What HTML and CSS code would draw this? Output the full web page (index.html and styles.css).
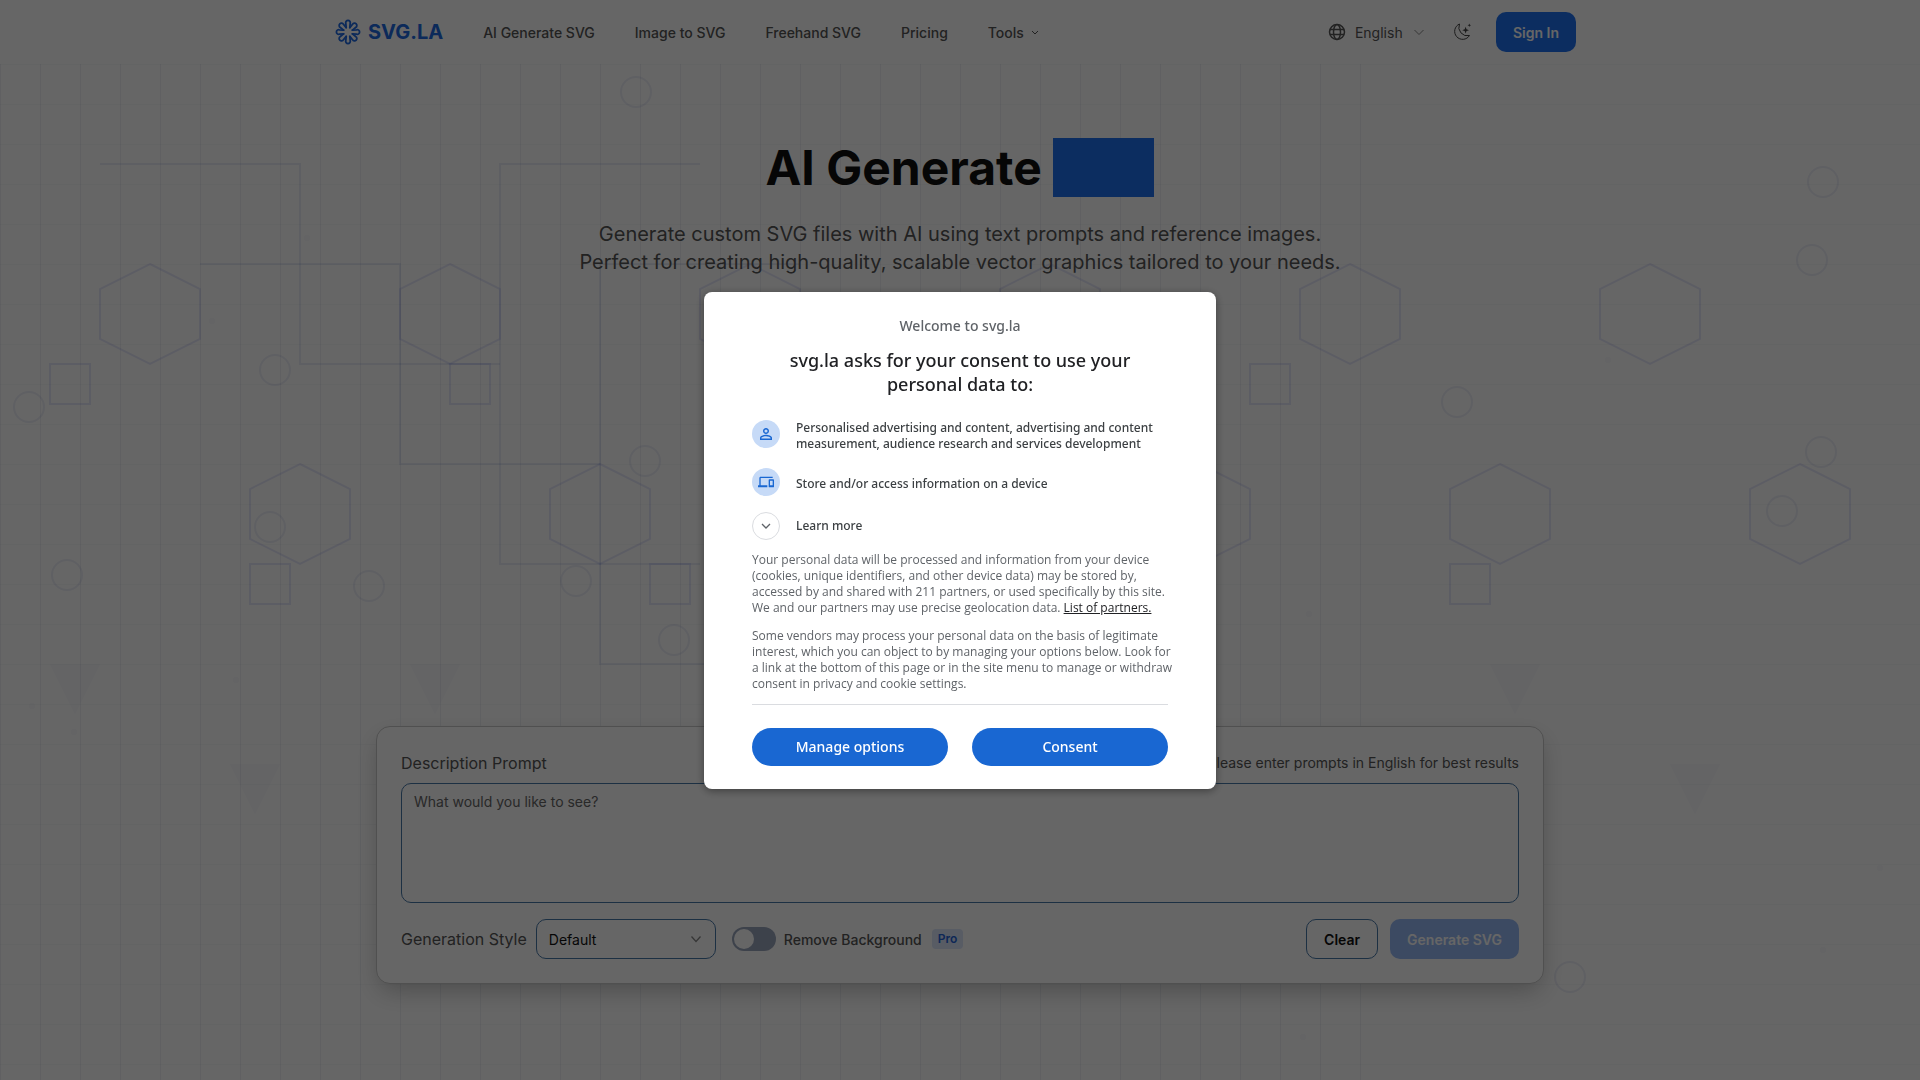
FILE: index.html
```html
<!DOCTYPE html>
<html lang="en">
<head>
    <meta charset="UTF-8">
    <meta name="viewport" content="width=device-width, initial-scale=1.0">
    <title>AI Generate SVG - SVG.LA</title>
    <link rel="stylesheet" href="styles.css">
</head>
<body>
    <header class="header">
        <div class="header-inner">
            <a class="logo" href="#">
                <svg width="26" height="26" viewBox="0 0 26 26" fill="none" stroke="currentColor" stroke-width="1.8" stroke-linecap="round">
                    <path id="petal" d="M11.2 8.6 L10.8 4.4 A2.3 2.3 0 1 1 15.2 4.4 L14.8 8.6"/>
                    <use href="#petal" transform="rotate(45 13 13)"/>
                    <use href="#petal" transform="rotate(90 13 13)"/>
                    <use href="#petal" transform="rotate(135 13 13)"/>
                    <use href="#petal" transform="rotate(180 13 13)"/>
                    <use href="#petal" transform="rotate(225 13 13)"/>
                    <use href="#petal" transform="rotate(270 13 13)"/>
                    <use href="#petal" transform="rotate(315 13 13)"/>
                </svg>
                <span>SVG.LA</span>
            </a>
            <nav class="nav">
                <a href="#">AI Generate SVG</a>
                <a href="#">Image to SVG</a>
                <a href="#">Freehand SVG</a>
                <a href="#">Pricing</a>
                <a href="#">Tools
                    <svg width="10" height="10" viewBox="0 0 10 10" fill="none" stroke="currentColor"><path d="M2 4 L5 7 L8 4"/></svg>
                </a>
            </nav>
            <div class="header-actions">
                <div class="language">
                    <svg width="18" height="18" viewBox="0 0 18 18" fill="none" stroke="currentColor" stroke-width="1.5">
                        <circle cx="9" cy="9" r="7.5"/>
                        <ellipse cx="9" cy="9" rx="3.5" ry="7.5"/>
                        <path d="M2 6.5 H16 M2 11.5 H16"/>
                    </svg>
                    <div class="select-wrap">
                        <select class="language-select" aria-label="Language">
                            <option>English</option>
                            <option>Deutsch</option>
                        </select>
                        <svg class="chevron" width="12" height="12" viewBox="0 0 12 12" fill="none" stroke="currentColor"><path d="M1.5 4 L6 8.5 L10.5 4"/></svg>
                    </div>
                </div>
                <button class="theme-button" aria-label="Toggle theme">
                    <svg width="20" height="20" viewBox="0 0 20 20" fill="none" stroke="currentColor" stroke-linejoin="round">
                        <path d="M7.5 2 A8 8 0 1 0 17.5 13.5 A8.5 8.5 0 0 1 7.5 2 Z"/>
                        <path fill="currentColor" stroke="none" d="M13.6 4.8 L14.5 7.3 L17 8.2 L14.5 9.1 L13.6 11.6 L12.7 9.1 L10.2 8.2 L12.7 7.3 Z M17.3 1.4 L17.8 2.7 L19.1 3.2 L17.8 3.7 L17.3 5 L16.8 3.7 L15.5 3.2 L16.8 2.7 Z"/>
                    </svg>
                </button>
                <button class="btn btn-primary">Sign In</button>
            </div>
        </div>
    </header>

    <main class="hero">
        <!-- Decorative background -->
        <svg class="hero-art" width="1920" height="1016" viewBox="0 0 1920 1016" fill="none" aria-hidden="true">
            <defs>
                <pattern id="v-lines" width="40" height="40" patternUnits="userSpaceOnUse"><rect width="1" height="40" class="grid-fill"/></pattern>
                <pattern id="h-lines" width="40" height="40" patternUnits="userSpaceOnUse"><rect width="40" height="1" class="grid-fill-soft"/></pattern>
                <path id="hexagon" d="M50 0 L100 25 V75 L50 100 L0 75 V25 Z"/>
                <rect id="square" width="40" height="40"/>
                <path id="triangle" d="M0 0 H50 L25 50 Z"/>
            </defs>
            <rect width="1361" height="1016" fill="url(#v-lines)"/>
            <rect width="1920" height="1016" fill="url(#h-lines)"/>
            <g class="art-circuit">
                <path d="M100 100 H300 V300 H500"/>
                <path d="M200 200 H400 V400 H600"/>
                <path d="M700 100 H500 V500 H700"/>
                <path d="M800 200 H600 V600 H800"/>
            </g>
            <g class="art-shape">
                <use href="#hexagon" x="100" y="200"/>
                <use href="#hexagon" x="400" y="200"/>
                <use href="#hexagon" x="700" y="200"/>
                <use href="#hexagon" x="1000" y="200"/>
                <use href="#hexagon" x="1300" y="200"/>
                <use href="#hexagon" x="1600" y="200"/>
                <use href="#hexagon" x="250" y="400"/>
                <use href="#hexagon" x="550" y="400"/>
                <use href="#hexagon" x="850" y="400"/>
                <use href="#hexagon" x="1150" y="400"/>
                <use href="#hexagon" x="1450" y="400"/>
                <use href="#hexagon" x="1750" y="400"/>
                <use href="#square" x="50" y="300"/>
                <use href="#square" x="450" y="300"/>
                <use href="#square" x="850" y="300"/>
                <use href="#square" x="1250" y="300"/>
                <use href="#square" x="250" y="500"/>
                <use href="#square" x="650" y="500"/>
                <use href="#square" x="1050" y="500"/>
                <use href="#square" x="1450" y="500"/>
            </g>
            <g class="art-triangle">
                <use href="#triangle" x="50" y="600"/>
                <use href="#triangle" x="410" y="600"/>
                <use href="#triangle" x="770" y="600"/>
                <use href="#triangle" x="1130" y="600"/>
                <use href="#triangle" x="1490" y="600"/>
                <use href="#triangle" x="230" y="700"/>
                <use href="#triangle" x="1670" y="700"/>
            </g>
            <g class="art-circle">
                <circle cx="636" cy="28" r="15"/>
                <circle cx="275" cy="306" r="15"/>
                <circle cx="29" cy="343" r="15"/>
                <circle cx="645" cy="397" r="15"/>
                <circle cx="270" cy="463" r="15"/>
                <circle cx="67" cy="511" r="15"/>
                <circle cx="369" cy="522" r="15"/>
                <circle cx="576" cy="517" r="15"/>
                <circle cx="674" cy="576" r="15"/>
                <circle cx="1823" cy="118" r="15"/>
                <circle cx="1812" cy="196" r="15"/>
                <circle cx="1457" cy="338" r="15"/>
                <circle cx="1821" cy="388" r="15"/>
                <circle cx="1782" cy="447" r="15"/>
                <circle cx="1570" cy="913" r="15"/>
            </g>
            <g class="art-dot">
                <circle cx="212" cy="257" r="3"/>
                <circle cx="307" cy="174" r="3"/>
                <circle cx="236" cy="616" r="3"/>
                <circle cx="32" cy="642" r="3"/>
                <circle cx="74" cy="668" r="3"/>
                <circle cx="1608" cy="296" r="3"/>
                <circle cx="1309" cy="550" r="3"/>
                <circle cx="1880" cy="804" r="3"/>
                <circle cx="1823" cy="886" r="3"/>
                <circle cx="1303" cy="973" r="3"/>
            </g>
        </svg>

        <div class="hero-intro">
            <h1>AI Generate <span class="highlight">SVG</span></h1>
            <p>Generate custom SVG files with AI using text prompts and reference images. Perfect for creating high-quality, scalable vector graphics tailored to your needs.</p>
        </div>

        <form class="card">
            <div class="card-top">
                <label for="prompt">Description Prompt</label>
                <span class="hint">Please enter prompts in English for best results</span>
            </div>
            <textarea id="prompt" placeholder="What would you like to see?"></textarea>
            <div class="card-bottom">
                <div class="options">
                    <label class="style-label" for="style">Generation Style</label>
                    <div class="select-wrap">
                        <select id="style" class="style-select">
                            <option>Default</option>
                            <option>Flat</option>
                        </select>
                        <svg class="chevron" width="12" height="12" viewBox="0 0 12 12" fill="none" stroke="currentColor" stroke-width="1.3"><path d="M1.5 3.5 L6 8.5 L10.5 3.5"/></svg>
                    </div>
                    <input type="checkbox" class="toggle" id="remove-bg">
                    <label class="toggle-label" for="remove-bg">Remove Background</label>
                    <span class="badge">Pro</span>
                </div>
                <div class="actions">
                    <button type="reset" class="btn btn-outline">Clear</button>
                    <button type="button" class="btn btn-primary" disabled>Generate SVG</button>
                </div>
            </div>
        </form>
    </main>

    <!-- Consent dialog -->
    <div class="overlay">
        <div class="consent" role="dialog" aria-modal="true" aria-labelledby="consent-title">
            <p class="consent-welcome">Welcome to svg.la</p>
            <h2 id="consent-title">svg.la asks for your consent to use your personal data to:</h2>
            <ul class="purposes">
                <li>
                    <span class="purpose-icon">
                        <svg width="18" height="18" viewBox="0 0 24 24" fill="currentColor"><path d="M12 5.9a2.1 2.1 0 1 1 0 4.2 2.1 2.1 0 0 1 0-4.2m0 9c2.97 0 6.1 1.46 6.1 2.1v1.1H5.9V17c0-.64 3.13-2.1 6.1-2.1M12 4C9.79 4 8 5.79 8 8s1.79 4 4 4 4-1.79 4-4-1.79-4-4-4zm0 9c-2.67 0-8 1.34-8 4v3h16v-3c0-2.66-5.33-4-8-4z"/></svg>
                    </span>
                    <span>Personalised advertising and content, advertising and content measurement, audience research and services development</span>
                </li>
                <li>
                    <span class="purpose-icon">
                        <svg width="16" height="16" viewBox="0 0 24 24" fill="currentColor"><path d="M4 6h18V4H4c-1.1 0-2 .9-2 2v11H0v3h14v-3H4V6zm19 2h-6c-.55 0-1 .45-1 1v10c0 .55.45 1 1 1h6c.55 0 1-.45 1-1V9c0-.55-.45-1-1-1zm-1 9h-4v-7h4v7z"/></svg>
                    </span>
                    <span>Store and/or access information on a device</span>
                </li>
                <li class="learn-more">
                    <button class="expand-button" id="learn-more" aria-label="Learn more">
                        <svg width="12" height="12" viewBox="0 0 12 12" fill="none" stroke="currentColor" stroke-width="1.3"><path d="M2 4 L6 8 L10 4"/></svg>
                    </button>
                    <label for="learn-more">Learn more</label>
                </li>
            </ul>
            <p class="consent-text">Your personal data will be processed and information from your device (cookies, unique identifiers, and other device data) may be stored by, accessed by and shared with 211 partners, or used specifically by this site. We and our partners may use precise geolocation data. <a href="#">List of partners.</a></p>
            <p class="consent-text">Some vendors may process your personal data on the basis of legitimate interest, which you can object to by managing your options below. Look for a link at the bottom of this page or in the site menu to manage or withdraw consent in privacy and cookie settings.</p>
            <div class="consent-buttons">
                <button>Manage options</button>
                <button>Consent</button>
            </div>
        </div>
    </div>
</body>
</html>
```

FILE: styles.css
```css
/* Global styling */
* { box-sizing: border-box; margin: 0; padding: 0; }
body { font-family: Inter, "Liberation Sans", sans-serif; background: #fff; color: #555; min-height: 100vh; overflow: hidden; }
a { color: inherit; text-decoration: none; }
button, select, textarea { font-family: inherit; font-size: 14px; }
button { cursor: pointer; }
svg { display: block; flex-shrink: 0; }

/* Header */
.header { height: 64px; background: #fff; }
.header-inner { max-width: 1280px; height: 100%; margin: 0 auto; padding: 0 24px 0 15px; display: flex; align-items: center; }
.logo { display: flex; align-items: center; gap: 7px; font-size: 20px; font-weight: 700; color: #2069e0; }
.nav { display: flex; gap: 40px; margin-left: 40px; font-size: 14px; font-weight: 500; }
.nav a { display: flex; align-items: center; gap: 6px; }
.header-actions { display: flex; align-items: center; margin-left: auto; }
.language { display: flex; align-items: center; gap: 9px; }
.language-select { appearance: none; border: 0; background: none; width: 70px; color: #555; }
.language .chevron { right: 0; }
.theme-button { border: 0; background: none; color: #444; margin: 0 24px 0 27px; }

/* Buttons */
.btn { height: 40px; padding: 0 17px; border: 0; border-radius: 10px; font-weight: 600; }
.btn-primary { background: #2072f0; color: #fff; }
.btn-primary:disabled { background: #96b9f5; }
.btn-outline { background: #fff; border: 1px solid #4878a8; color: #111; }

/* Selects */
.select-wrap { position: relative; }
.chevron { position: absolute; top: 50%; right: 14px; margin-top: -6px; pointer-events: none; color: #888; }

/* Hero */
.hero { position: relative; min-height: calc(100vh - 64px); padding: 72px 24px 96px; overflow: hidden; }
.hero-art { position: absolute; top: 0; left: 0; }
.grid-fill { fill: rgba(30, 60, 110, 0.07); }
.grid-fill-soft { fill: rgba(30, 60, 110, 0.03); }
.art-circuit { stroke: rgba(50, 90, 190, 0.1); stroke-width: 2; }
.art-shape { stroke: rgba(70, 80, 220, 0.13); stroke-width: 2; }
.art-circle { stroke: rgba(70, 80, 180, 0.09); stroke-width: 2; }
.art-triangle { fill: rgba(80, 80, 200, 0.03); }
.art-dot { fill: rgba(80, 80, 160, 0.03); }
.hero-intro { position: relative; min-height: 590px; display: flex; flex-direction: column; align-items: center; gap: 20px; text-align: center; }
.hero-intro h1 { font-size: 48px; font-weight: 700; line-height: 64px; color: #111; }
.highlight { background: #2072f0; color: transparent; }
.hero-intro p { max-width: 768px; font-size: 20px; line-height: 28px; }

/* Generator card */
.card { position: relative; max-width: 1168px; margin: 0 auto; padding: 24px; background: #fff; border: 1px solid #c8c8c8; border-radius: 14px; box-shadow: 0 10px 24px -4px rgba(0, 0, 0, 0.25); }
.card-top { display: flex; justify-content: space-between; align-items: center; margin-bottom: 8px; line-height: 24px; font-size: 16px; }
.hint { font-size: 14px; }
textarea { display: block; width: 100%; height: 120px; padding: 8px 12px; line-height: 20px; border: 1px solid #4878a8; border-radius: 10px; background: #fff; resize: none; }
textarea::placeholder { color: #666; }
.card-bottom { display: flex; justify-content: space-between; align-items: center; margin-top: 16px; }
.options, .actions { display: flex; align-items: center; }
.actions { gap: 12px; }
.style-label { margin-right: 9px; font-size: 16px; }
.style-select { appearance: none; width: 180px; height: 40px; padding: 0 12px; border: 1px solid #4878a8; border-radius: 10px; background: #fff; color: #111; }
.toggle { appearance: none; width: 44px; height: 24px; margin: 0 8px 0 16px; border-radius: 12px; background: #9aa5bc; }
.toggle::before { content: ""; display: block; width: 20px; height: 20px; margin: 2px; border-radius: 50%; background: #fff; }
.toggle-label { font-size: 14px; font-weight: 500; }
.badge { margin-left: 10px; padding: 0 6px; line-height: 20px; border-radius: 4px; background: #dbe6fb; color: #2563d8; font-size: 12px; font-weight: 600; }

/* Consent dialog */
.overlay { position: fixed; inset: 0; display: flex; align-items: center; justify-content: center; background: rgba(0, 0, 0, 0.6); font-family: "Noto Sans", "Open Sans", sans-serif; }
.consent { width: 512px; padding: 24px 48px 23px; background: #fff; border-radius: 8px; box-shadow: 0 2px 8px rgba(0, 0, 0, 0.4); }
.consent-welcome { text-align: center; font-size: 14px; line-height: 20px; font-weight: 500; color: #5f6368; }
.consent h2 { margin: 12px 0 24px; padding: 0 24px; text-align: center; font-size: 18px; line-height: 24px; font-weight: 500; color: #202124; }
.purposes { list-style: none; display: flex; flex-direction: column; gap: 16px; margin-bottom: 12px; }
.purposes li { display: grid; grid-template-columns: 28px 1fr; gap: 16px; align-items: center; min-height: 32px; font-size: 12px; line-height: 16px; font-weight: 500; color: #3c4043; }
.purposes .learn-more { min-height: 28px; margin-top: -4px; }
.purpose-icon, .expand-button { display: flex; align-items: center; justify-content: center; align-self: start; width: 28px; height: 28px; border-radius: 50%; }
.purpose-icon { background: #c6daf7; color: #1967d2; }
.expand-button { background: #fff; border: 1px solid #dadce0; color: #5f6368; }
.consent-text { margin: 0 -6px 12px 0; font-family: "Open Sans", "Noto Sans", sans-serif; font-size: 12px; line-height: 16px; color: #5f6368; }
.consent-text a { color: #202124; text-decoration: underline; }
.consent-buttons { display: grid; grid-template-columns: 1fr 1fr; gap: 24px; padding-top: 23px; border-top: 1px solid #dadce0; }
.consent-buttons button { height: 38px; border: 0; border-radius: 19px; background: #1967d2; color: #fff; font-size: 14px; font-weight: 500; }
```
